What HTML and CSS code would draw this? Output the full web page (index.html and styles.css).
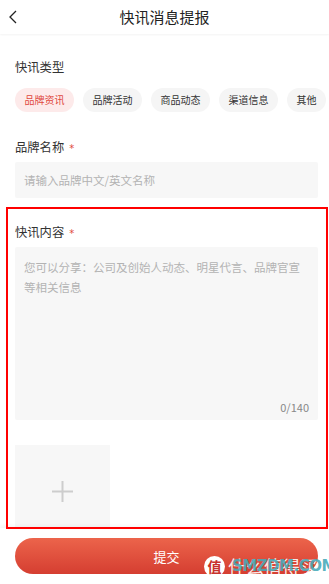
FILE: index.html
```html
<!DOCTYPE html>
<html lang="zh-CN">
<head>
<meta charset="utf-8">
<title>快讯消息提报</title>
<link rel="stylesheet" href="styles.css">
</head>
<body>
<div class="app">
  <header class="header">
    <div class="back">
      <svg width="8" height="14" viewBox="0 0 8 14"><path d="M7 1 L1 7 L7 13" fill="none" stroke="#222" stroke-width="1.3"/></svg>
    </div>
    <h1 class="title">快讯消息提报</h1>
    <div></div>
  </header>
  <main class="content">
    <div class="label label-first">快讯类型</div>
    <div class="chips">
      <span class="chip chip-active">品牌资讯</span>
      <span class="chip">品牌活动</span>
      <span class="chip">商品动态</span>
      <span class="chip">渠道信息</span>
      <span class="chip">其他</span>
    </div>
    <div class="label">品牌名称<span class="star">*</span></div>
    <input class="input" type="text" placeholder="请输入品牌中文/英文名称">
    <div class="label label-third">快讯内容<span class="star">*</span></div>
    <div class="textbox">
      <textarea class="textarea" placeholder="您可以分享：公司及创始人动态、明星代言、品牌官宣等相关信息"></textarea>
      <div class="counter">0/140</div>
    </div>
    <div class="upload">
      <svg width="21" height="21" viewBox="0 0 21 21"><path d="M10.5 0 V21 M0 10.5 H21" stroke="#cdcdcd" stroke-width="2"/></svg>
    </div>
  </main>
  <footer class="footer">
    <button class="submit">提交</button>
  </footer>
  <div class="annot"></div>
  <div class="watermark">
    <span class="wm-logo">值</span>
    <span class="wm-text">什么值得买<span class="wm-en">SMZDM.COM</span></span>
  </div>
</div>
</body>
</html>
```
FILE: styles.css
```css
* { box-sizing: border-box; }
html, body { margin: 0; padding: 0; background: #fff; }
body { font-family: "Noto Sans CJK SC", "Noto Sans", sans-serif; color: #333; }
.app { width: 329px; height: 584px; display: flex; flex-direction: column; position: relative; overflow: hidden; background: #fff; }
.header { flex: none; height: 34px; display: grid; grid-template-columns: 40px 1fr 40px; align-items: center; background: #fff; box-shadow: 0 1px 2px rgba(0,0,0,0.05); position: relative; z-index: 1; }
.back { padding-left: 9px; display: flex; align-items: center; }
.title { margin: 0; font-size: 15px; font-weight: normal; color: #222; text-align: center; line-height: 20px; }
.content { flex: 1; overflow: hidden; padding: 0 11px 0 15px; }
.label { font-size: 12.3px; line-height: 20px; color: #333; margin-top: 25px; display: flex; align-items: center; }
.label-first { margin-top: 23px; }
.label-third { margin-top: 24px; }
.star { color: #e0483d; font-family: "DejaVu Sans", sans-serif; font-size: 10px; line-height: 10px; margin-left: 5px; position: relative; top: 2px; }
.chips { display: flex; gap: 9px; margin-top: 11px; white-space: nowrap; margin-right: -11px; }
.chip { flex: none; height: 24px; line-height: 24px; padding: 0 9.5px; border-radius: 12px; background: #f5f5f5; font-size: 10px; color: #333; }
.chip-active { background: #fdeaea; color: #e0483d; }
.input { display: block; width: 100%; height: 36px; margin-top: 5px; border: none; outline: none; border-radius: 2px; background: #f7f7f7; padding: 0 9px; font-family: inherit; font-size: 11.5px; color: #333; }
.input::placeholder { color: #b3b3b3; }
.textbox { margin-top: 5px; height: 173px; background: #f7f7f7; border-radius: 2px; display: flex; flex-direction: column; padding: 11px 12px 5px 9px; }
.textarea { flex: 1; border: none; outline: none; resize: none; background: transparent; padding: 0; margin: 0; font-family: inherit; font-size: 11.5px; line-height: 19.5px; color: #333; }
.textarea::placeholder { color: #b3b3b3; }
.counter { text-align: right; font-size: 11px; line-height: 16px; color: #888; margin-right: -3px; }
.upload { margin-top: 25px; width: 95px; height: 95px; background: #f7f7f7; display: flex; align-items: center; justify-content: center; padding-bottom: 2px; }
.footer { flex: none; height: 56px; padding: 10px 11px 10px 15px; background: #fff; box-shadow: 0 -2px 4px rgba(0,0,0,0.05); position: relative; }
.submit { display: block; width: 100%; height: 36px; border: none; border-radius: 18px; background: linear-gradient(#ec644b, #d53e31); color: #fff; font-family: inherit; font-size: 13px; padding: 0; }
.annot { position: absolute; left: 6px; top: 207px; width: 322px; height: 322px; border: 2px solid #ff0000; pointer-events: none; }
.watermark { position: absolute; left: 204px; top: 555px; display: flex; align-items: center; gap: 3px; pointer-events: none; }
.wm-logo { width: 21px; height: 21px; border-radius: 50%; background: #fff; color: #c8322c; font-size: 14px; font-weight: bold; line-height: 21px; text-align: center; }
.wm-text { position: relative; font-size: 18px; line-height: 22px; color: rgba(255,255,255,0.9); }
.wm-en { position: absolute; left: 4px; top: 2px; font-family: "DejaVu Sans", sans-serif; font-size: 15px; line-height: 18px; font-weight: bold; color: rgba(70,170,185,0.9); letter-spacing: -0.5px; }
```
